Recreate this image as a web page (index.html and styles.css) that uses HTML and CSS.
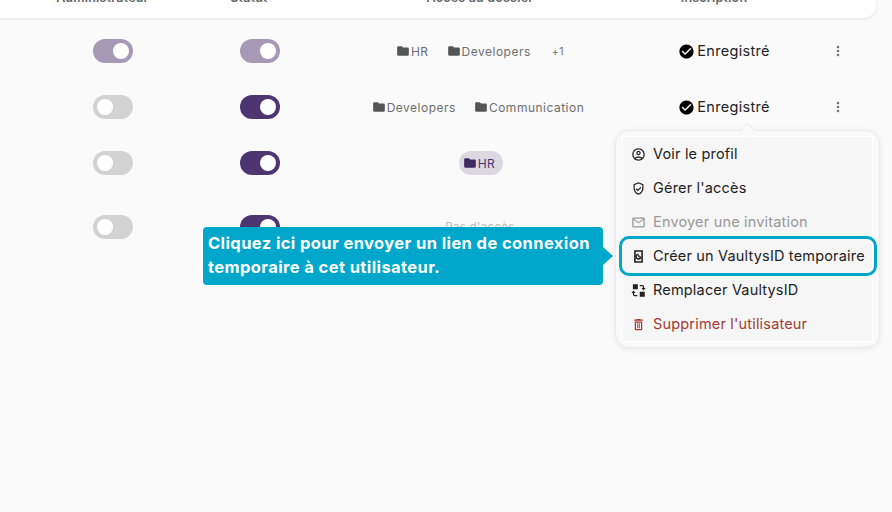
FILE: index.html
```html
<!DOCTYPE html>
<html lang="fr">
<head>
    <meta charset="UTF-8">
    <meta name="viewport" content="width=device-width, initial-scale=1.0">
    <title>Utilisateurs</title>
    <link rel="stylesheet" href="styles.css">
</head>
<body>
    <svg class="sprites" width="0" height="0">
        <symbol id="i-folder" viewBox="0 0 24 24"><path d="M10 4H4c-1.1 0-1.99.9-1.99 2L2 18c0 1.1.9 2 2 2h16c1.1 0 2-.9 2-2V8c0-1.1-.9-2-2-2h-8z"/></symbol>
        <symbol id="i-check" viewBox="0 0 24 24"><path d="M12 2C6.48 2 2 6.48 2 12s4.48 10 10 10 10-4.48 10-10S17.52 2 12 2zm-2 15-5-5 1.41-1.41L10 14.17l7.59-7.59L19 8l-9 9z"/></symbol>
        <symbol id="i-more" viewBox="0 0 24 24"><path d="M12 8c1.1 0 2-.9 2-2s-.9-2-2-2-2 .9-2 2 .9 2 2 2zm0 2c-1.1 0-2 .9-2 2s.9 2 2 2 2-.9 2-2-.9-2-2-2zm0 6c-1.1 0-2 .9-2 2s.9 2 2 2 2-.9 2-2-.9-2-2-2z"/></symbol>
        <symbol id="i-profile" viewBox="0 0 24 24"><path d="M12 2C6.48 2 2 6.48 2 12s4.48 10 10 10 10-4.48 10-10S17.52 2 12 2zM7.35 18.5C8.66 17.56 10.26 17 12 17s3.34.56 4.65 1.5c-1.31.94-2.91 1.5-4.65 1.5s-3.34-.56-4.65-1.5zm10.79-1.38C16.45 15.8 14.32 15 12 15s-4.45.8-6.14 2.12C4.7 15.73 4 13.95 4 12c0-4.42 3.58-8 8-8s8 3.58 8 8c0 1.95-.7 3.73-1.86 5.12zM12 6c-1.93 0-3.5 1.57-3.5 3.5S10.07 13 12 13s3.5-1.57 3.5-3.5S13.93 6 12 6zm0 5c-.83 0-1.5-.67-1.5-1.5S11.17 8 12 8s1.5.67 1.5 1.5S12.83 11 12 11z"/></symbol>
        <symbol id="i-shield" viewBox="0 0 24 24"><path d="M12 2 4 5v6.09c0 5.05 3.41 9.76 8 10.91 4.59-1.15 8-5.86 8-10.91V5l-8-3zm6 9.09c0 4-2.55 7.7-6 8.83-3.45-1.13-6-4.82-6-8.83V6.31l6-2.25 6 2.25v4.78zm-9.18.5L7.4 13l3.54 3.54 5.66-5.66-1.41-1.41-4.24 4.24-2.13-2.12z"/></symbol>
        <symbol id="i-mail" viewBox="0 0 24 24"><path d="M20 4H4c-1.1 0-1.99.9-1.99 2L2 18c0 1.1.9 2 2 2h16c1.1 0 2-.9 2-2V6c0-1.1-.9-2-2-2zm0 14H4V8l8 5 8-5v10zm-8-7L4 6h16l-8 5z"/></symbol>
        <symbol id="i-temp" viewBox="0 0 24 24"><path d="M19 2H5v20h14V2zm-2.5 17.5h-9v-15h9v15z"/><path d="M12 7a5 5 0 1 0 5 5h-2.4A2.6 2.6 0 1 1 12 9.4V7z"/><path d="M11.5 9.5v3.4l3 1.2.7-1.6-1.7-.7V9.5z"/></symbol>
        <symbol id="i-swap" viewBox="0 0 24 24"><path d="M3 2h8v8H3zM14 14h8v8h-8z"/><path d="M14 3h4a3 3 0 0 1 3 3v2h2.4L20 12l-3.4-4H19V6a1 1 0 0 0-1-1h-4zM10 21H6a3 3 0 0 1-3-3v-2H.6L4 12l3.4 4H5v2a1 1 0 0 0 1 1h4z"/></symbol>
        <symbol id="i-trash" viewBox="0 0 24 24"><path d="M16 9v10H8V9h8m-1.5-6h-5l-1 1H5v2h14V4h-3.5l-1-1zM18 7H6v12c0 1.1.9 2 2 2h8c1.1 0 2-.9 2-2V7z"/><path d="M10 10h1.5v8H10zM12.5 10H14v8h-1.5z"/></symbol>
    </svg>

    <div class="table-head">
        <div class="cols">
            <span class="head-left">Administrateur</span>
            <span class="head-left">Statut</span>
            <span>Accès au dossier</span>
            <span class="head-signup">Inscription</span>
        </div>
    </div>

    <div class="table-body">
        <div class="cols row">
            <span class="toggle on faded"></span>
            <span class="toggle on faded"></span>
            <div class="chips">
                <span class="chip"><svg class="ic-folder"><use href="#i-folder"/></svg>HR</span>
                <span class="chip"><svg class="ic-folder"><use href="#i-folder"/></svg>Developers</span>
                <span class="chip more">+1</span>
            </div>
            <div class="signup"><svg class="ic-check"><use href="#i-check"/></svg><span>Enregistré</span></div>
            <svg class="ic-more"><use href="#i-more"/></svg>
        </div>
        <div class="cols row">
            <span class="toggle off"></span>
            <span class="toggle on"></span>
            <div class="chips">
                <span class="chip"><svg class="ic-folder"><use href="#i-folder"/></svg>Developers</span>
                <span class="chip"><svg class="ic-folder"><use href="#i-folder"/></svg>Communication</span>
            </div>
            <div class="signup"><svg class="ic-check"><use href="#i-check"/></svg><span>Enregistré</span></div>
            <svg class="ic-more"><use href="#i-more"/></svg>
        </div>
        <div class="cols row">
            <span class="toggle off"></span>
            <span class="toggle on"></span>
            <div class="chips">
                <span class="chip active"><svg class="ic-folder"><use href="#i-folder"/></svg>HR</span>
            </div>
        </div>
        <div class="cols row tall">
            <span class="toggle off"></span>
            <span class="toggle on"></span>
            <div class="chips"><span class="no-access">Pas d'accès</span></div>
        </div>
    </div>

    <div class="menu">
        <span class="menu-tip"></span>
        <ul class="menu-list">
            <li><svg class="ic-menu"><use href="#i-profile"/></svg>Voir le profil</li>
            <li><svg class="ic-menu"><use href="#i-shield"/></svg>Gérer l'accès</li>
            <li class="disabled"><svg class="ic-menu"><use href="#i-mail"/></svg>Envoyer une invitation</li>
            <li class="highlight"><svg class="ic-menu"><use href="#i-temp"/></svg>Créer un VaultysID temporaire</li>
            <li><svg class="ic-menu"><use href="#i-swap"/></svg>Remplacer VaultysID</li>
            <li class="danger"><svg class="ic-menu"><use href="#i-trash"/></svg>Supprimer l'utilisateur</li>
        </ul>
    </div>

    <div class="callout">Cliquez ici pour envoyer un lien de connexion temporaire à cet utilisateur.</div>
</body>
</html>
```

FILE: styles.css
```css
html, body {
    height: 100%;
}
body {
    margin: 0;
    position: relative;
    overflow: hidden;
    background-color: #fafafa;
    font-family: Inter, "Open Sans", sans-serif;
    color: #222;
}
.sprites {
    position: absolute;
}
.cols {
    display: grid;
    grid-template-columns: 146px 147px 294px 190px 42px;
    padding-left: 40px;
    align-items: center;
    justify-items: center;
}
.table-head {
    width: 876px;
    height: 18px;
    box-sizing: border-box;
    overflow: hidden;
    background: #fff;
    border-radius: 0 0 12px 0;
    box-shadow: 0 1px 3px rgba(0,0,0,0.1);
    display: flex;
    align-items: flex-end;
    font-size: 12.5px;
    font-weight: 600;
    letter-spacing: 0.2px;
    color: #666;
    line-height: 14px;
    padding-bottom: 13px;
}
.head-left {
    margin-right: 21px;
}
.head-signup {
    margin-right: 16px;
}
.table-body {
    padding-top: 5px;
}
.row {
    height: 56px;
}
.row.tall {
    height: 72px;
}
.toggle {
    position: relative;
    display: block;
    width: 40px;
    height: 24px;
    border-radius: 12px;
}
.toggle::after {
    content: "";
    position: absolute;
    top: 4px;
    width: 16px;
    height: 16px;
    border-radius: 50%;
    background: #fff;
}
.toggle.on {
    background: #4d3670;
}
.toggle.on::after {
    right: 4px;
}
.toggle.off {
    background: #d2d2d2;
}
.toggle.off::after {
    left: 4px;
}
.toggle.faded {
    background: #a599b6;
}
.chips {
    display: flex;
    gap: 6px;
    align-items: center;
}
.chip {
    display: flex;
    align-items: center;
    gap: 2px;
    height: 24px;
    padding: 0 8px 0 4px;
    border-radius: 12px;
    font-size: 12px;
    letter-spacing: 0.5px;
    color: #6e6e6e;
}
.chip.more {
    padding: 0 4px 0 7px;
    font-size: 10.5px;
}
.chip.active {
    margin-left: 2px;
    background: #dcd8e2;
    color: #4a3570;
}
.ic-folder {
    width: 14px;
    height: 14px;
    margin-right: -1px;
    fill: #555;
}
.active .ic-folder {
    fill: #3d2a60;
}
.no-access {
    font-size: 11.5px;
    letter-spacing: 0.3px;
    color: #bbb;
}
.signup {
    display: flex;
    align-items: center;
    gap: 2px;
    font-size: 14.5px;
    letter-spacing: 0.3px;
    color: #222;
    margin-left: 4px;
}
.signup span {
    margin-top: -2px;
}
.ic-check {
    width: 17px;
    height: 17px;
    fill: #000;
}
.ic-more {
    width: 16px;
    height: 16px;
    fill: #777;
}

/* popup menu over the table */
.menu {
    position: absolute;
    left: 615px;
    top: 130px;
    width: 265px;
    height: 218px;
    box-sizing: border-box;
    padding: 5px 6px;
    background: #f9f9f9;
    border: 1px solid #ebebeb;
    border-radius: 14px;
    box-shadow: 0 1px 6px rgba(0,0,0,0.07);
}
.menu-tip {
    position: absolute;
    left: 126px;
    top: -6px;
    width: 10px;
    height: 10px;
    background: #f9f9f9;
    border: 1px solid #ebebeb;
    border-width: 1px 0 0 1px;
    transform: rotate(45deg);
}
.menu-list {
    list-style: none;
    margin: 0;
    padding: 0;
    background: #f6f6f6;
    border: 1px solid #fff;
}
.menu-list li {
    position: relative;
    display: flex;
    align-items: center;
    gap: 7px;
    height: 34px;
    box-sizing: border-box;
    padding: 0 0 2px 8px;
    font-size: 14.5px;
    letter-spacing: 0.18px;
    color: #222;
}
.ic-menu {
    width: 15px;
    height: 15px;
    margin-top: 2px;
    fill: #222;
}
.menu-list li.disabled {
    color: #999;
}
.disabled .ic-menu {
    fill: #999;
}
.menu-list li.danger {
    color: #a33a34;
}
.danger .ic-menu {
    fill: #a33a34;
}
.menu-list li.highlight::after {
    content: "";
    position: absolute;
    left: -4px;
    right: -5px;
    top: -3px;
    bottom: -3px;
    border: 3px solid #00a7c9;
    border-radius: 10px;
    box-sizing: border-box;
}

/* tutorial callout */
.callout {
    position: absolute;
    left: 203px;
    top: 227px;
    width: 400px;
    height: 58px;
    box-sizing: border-box;
    padding: 4px 5px;
    border-radius: 4px;
    background: #00a7cb;
    color: #fff;
    font-size: 16.5px;
    font-weight: 700;
    line-height: 24px;
    letter-spacing: 0.4px;
}
.callout::after {
    content: "";
    position: absolute;
    right: -10px;
    top: 20px;
    border-left: 10px solid #00a7cb;
    border-top: 9px solid transparent;
    border-bottom: 9px solid transparent;
}
```
